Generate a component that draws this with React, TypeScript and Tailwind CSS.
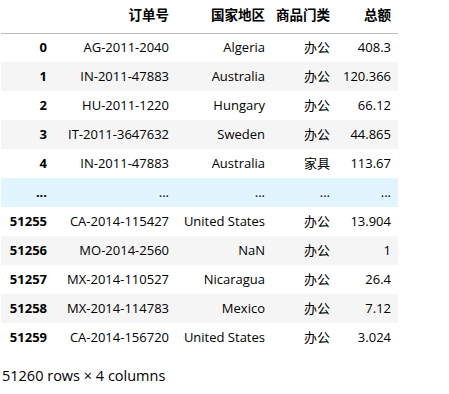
const rows: [string, string, string, string, string][] = [
  ["0", "AG-2011-2040", "Algeria", "办公", "408.3"],
  ["1", "IN-2011-47883", "Australia", "办公", "120.366"],
  ["2", "HU-2011-1220", "Hungary", "办公", "66.12"],
  ["3", "IT-2011-3647632", "Sweden", "办公", "44.865"],
  ["4", "IN-2011-47883", "Australia", "家具", "113.67"],
  ["...", "...", "...", "...", "..."],
  ["51255", "CA-2014-115427", "United States", "办公", "13.904"],
  ["51256", "MO-2014-2560", "NaN", "办公", "1"],
  ["51257", "MX-2014-110527", "Nicaragua", "办公", "26.4"],
  ["51258", "MX-2014-114783", "Mexico", "办公", "7.12"],
  ["51259", "CA-2014-156720", "United States", "办公", "3.024"],
];

const widths = ["w-[53px]", "w-[122px]", "w-[96px]", "w-[65px]", "w-[61px]"];

export default function App() {
  return (
    <div className="bg-white h-[394px] pl-px text-black font-['Segoe_UI','Open_Sans','Noto_Sans_CJK_SC',sans-serif] text-[13px]">
      <table className="border-collapse table-fixed w-[397px]">
        <thead>
          <tr className="h-[33px] border-b border-[#bdbdbd]">
            {["", "订单号", "国家地区", "商品门类", "总额"].map((h, i) => (
              <th key={i} className={`${widths[i]} text-right font-bold text-[13.5px] pr-[7px] pl-0 pb-[2px]`}>
                {h}
              </th>
            ))}
          </tr>
        </thead>
        <tbody>
          {rows.map((r, ri) => (
            <tr
              key={ri}
              className={`h-[29px] ${r[0] === "..." ? "bg-[#e1f5fe]" : ri % 2 === 1 ? "bg-[#f5f5f5]" : "bg-white"}`}
            >
              {r.map((c, ci) => (
                <td key={ci} className={`text-right pr-[7px] pl-0 whitespace-nowrap ${ci === 0 ? "font-bold" : ""}`}>
                  {c}
                </td>
              ))}
            </tr>
          ))}
        </tbody>
      </table>
      <p className="mt-[13px] pl-px text-[14.5px]">51260 rows × 4 columns</p>
    </div>
  );
}
